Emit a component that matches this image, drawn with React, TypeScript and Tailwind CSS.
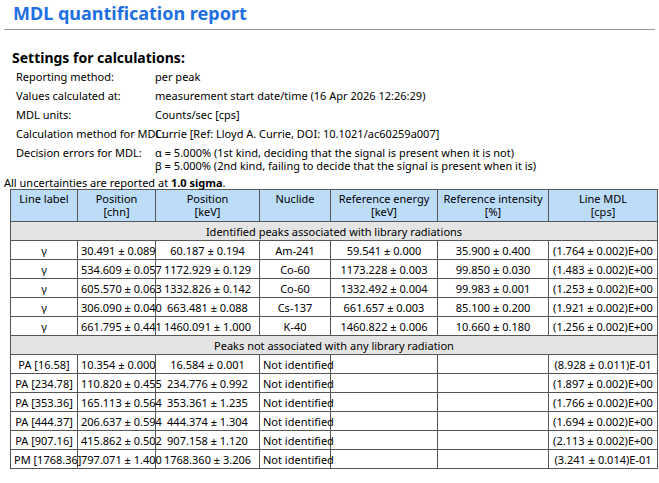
const settings: [string, string[]][] = [
  ["Reporting method:", ["per peak"]],
  ["Values calculated at:", ["measurement start date/time (16 Apr 2026 12:26:29)"]],
  ["MDL units:", ["Counts/sec [cps]"]],
  ["Calculation method for MDL:", ["Currie [Ref: Lloyd A. Currie, DOI: 10.1021/ac60259a007]"]],
  ["Decision errors for MDL:", [
    "α = 5.000% (1st kind, deciding that the signal is present when it is not)",
    "β = 5.000% (2nd kind, failing to decide that the signal is present when it is)",
  ]],
];

const identified = [
  ["γ", "30.491 ± 0.089", "60.187 ± 0.194", "Am-241", "59.541 ± 0.000", "35.900 ± 0.400", "(1.764 ± 0.002)E+00"],
  ["γ", "534.609 ± 0.057", "1172.929 ± 0.129", "Co-60", "1173.228 ± 0.003", "99.850 ± 0.030", "(1.483 ± 0.002)E+00"],
  ["γ", "605.570 ± 0.063", "1332.826 ± 0.142", "Co-60", "1332.492 ± 0.004", "99.983 ± 0.001", "(1.253 ± 0.002)E+00"],
  ["γ", "306.090 ± 0.040", "663.481 ± 0.088", "Cs-137", "661.657 ± 0.003", "85.100 ± 0.200", "(1.921 ± 0.002)E+00"],
  ["γ", "661.795 ± 0.441", "1460.091 ± 1.000", "K-40", "1460.822 ± 0.006", "10.660 ± 0.180", "(1.256 ± 0.002)E+00"],
];

const unassoc = [
  ["PA [16.58]", "10.354 ± 0.000", "16.584 ± 0.001", "(8.928 ± 0.011)E-01"],
  ["PA [234.78]", "110.820 ± 0.455", "234.776 ± 0.992", "(1.897 ± 0.002)E+00"],
  ["PA [353.36]", "165.113 ± 0.564", "353.361 ± 1.235", "(1.766 ± 0.002)E+00"],
  ["PA [444.37]", "206.637 ± 0.594", "444.374 ± 1.304", "(1.694 ± 0.002)E+00"],
  ["PA [907.16]", "415.862 ± 0.502", "907.158 ± 1.120", "(2.113 ± 0.002)E+00"],
  ["PM [1768.36]", "797.071 ± 1.400", "1768.360 ± 3.206", "(3.241 ± 0.014)E-01"],
];

const td = "border border-[#555] px-[3px] py-0 h-[19px] whitespace-nowrap";

export default function App() {
  return (
    <div className="w-[659px] h-[483px] overflow-hidden bg-white text-black text-[11px] leading-[13px] font-['Liberation_Sans']">
      <div className="px-[10px] pt-[2px] pb-[5px] border-b border-[#999] mx-[4px]">
        <h1 className="text-[18px] leading-[22px] font-bold text-[#1f6fe0] -ml-[1px]">MDL quantification report</h1>
      </div>
      <h2 className="mt-[19px] ml-[12px] text-[14px] leading-[17px] font-bold">Settings for calculations:</h2>
      <div className="ml-[16px] mt-[1px]">
        {settings.map(([k, v]) => (
          <div key={k} className="flex py-[3px] whitespace-nowrap">
            <div className="w-[139px] shrink-0">{k}</div>
            <div>{v.map((l) => <div key={l}>{l}</div>)}</div>
          </div>
        ))}
      </div>
      <div className="ml-[4px] mt-[1px]">All uncertainties are reported at <b>1.0 sigma</b>.</div>
      <table className="ml-[10px] w-[647px] border-collapse text-center table-fixed">
        <colgroup>
          <col className="w-[67px]" /><col className="w-[78px]" /><col className="w-[104px]" /><col className="w-[71px]" />
          <col className="w-[107px]" /><col className="w-[111px]" /><col className="w-[109px]" />
        </colgroup>
        <thead>
          <tr className="bg-[#bcdcf8]">
            {[["Line label", ""], ["Position", "[chn]"], ["Position", "[keV]"], ["Nuclide", ""], ["Reference energy", "[keV]"], ["Reference intensity", "[%]"], ["Line MDL", "[cps]"]].map(([a, b], i) => (
              <th key={i} className="border border-[#555] font-normal align-top h-[32px] pt-[2px] whitespace-nowrap">
                <div>{a}</div><div>{b}</div>
              </th>
            ))}
          </tr>
        </thead>
        <tbody>
          <tr className="bg-[#e4e4e4]"><td colSpan={7} className={td}>Identified peaks associated with library radiations</td></tr>
          {identified.map((r, i) => (
            <tr key={i}>{r.map((c, j) => <td key={j} className={td}>{c}</td>)}</tr>
          ))}
          <tr className="bg-[#e4e4e4]"><td colSpan={7} className={td}>Peaks not associated with any library radiation</td></tr>
          {unassoc.map((r, i) => (
            <tr key={i}>
              <td className={td}>{r[0]}</td>
              <td className={td}>{r[1]}</td>
              <td className={td}>{r[2]}</td>
              <td className={`${td} text-left`}>Not identified</td>
              <td className={td}></td>
              <td className={td}></td>
              <td className={td}>{r[3]}</td>
            </tr>
          ))}
        </tbody>
      </table>
    </div>
  );
}
